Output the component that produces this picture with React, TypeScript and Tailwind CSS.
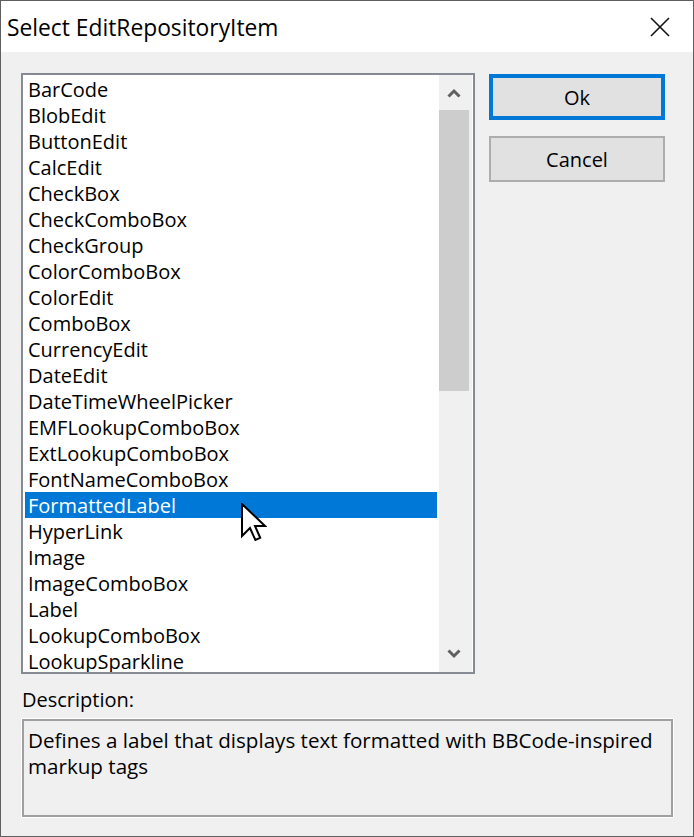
import React from "react";

const items = [
  "BarCode",
  "BlobEdit",
  "ButtonEdit",
  "CalcEdit",
  "CheckBox",
  "CheckComboBox",
  "CheckGroup",
  "ColorComboBox",
  "ColorEdit",
  "ComboBox",
  "CurrencyEdit",
  "DateEdit",
  "DateTimeWheelPicker",
  "EMFLookupComboBox",
  "ExtLookupComboBox",
  "FontNameComboBox",
  "FormattedLabel",
  "HyperLink",
  "Image",
  "ImageComboBox",
  "Label",
  "LookupComboBox",
  "LookupSparkline",
];

function Chevron({ up }: { up: boolean }) {
  return (
    <svg width="14" height="10" viewBox="0 0 14 10">
      <polyline
        points={up ? "1.5,8.5 7,3 12.5,8.5" : "1.5,1.5 7,7 12.5,1.5"}
        fill="none"
        stroke="#606060"
        strokeWidth="3"
        strokeLinejoin="miter"
      />
    </svg>
  );
}

export default function App() {
  return (
    <div className="relative w-[694px] h-[837px] border border-[#5f5f5f] bg-[#f0f0f0] flex flex-col font-['Open_Sans',sans-serif] text-black overflow-hidden">
      {/* Title bar */}
      <div className="h-[51px] bg-white flex items-center justify-between shrink-0">
        <div className="pl-[6px] pt-[2px] text-[22.8px] leading-[30px]">Select EditRepositoryItem</div>
        <div className="w-[60px] h-[51px] flex items-center justify-center mr-[3px]">
          <svg width="20" height="20" viewBox="0 0 20 20">
            <path d="M1 1 L19 19 M19 1 L1 19" stroke="#111" strokeWidth="1.6" />
          </svg>
        </div>
      </div>

      {/* Body */}
      <div className="flex-1 flex flex-col pl-[20px] pt-[21px]">
        <div className="flex gap-[14px]">
          {/* List box */}
          <div className="w-[454px] h-[601px] border-2 border-[#868a92] bg-white flex overflow-hidden">
            <div className="w-[412px] ml-[2px] mr-[2px] pt-[1px] flex flex-col text-[20px] leading-[26px]">
              {items.map((it) => (
                <div
                  key={it}
                  className={
                    it === "FormattedLabel"
                      ? "h-[26px] shrink-0 pl-[3px] pt-[1px] whitespace-nowrap bg-[#0078d7] text-white"
                      : "h-[26px] shrink-0 pl-[3px] pt-[1px] whitespace-nowrap"
                  }
                >
                  {it}
                </div>
              ))}
            </div>
            {/* Scrollbar */}
            <div className="w-[33px] h-full bg-[#f0f0f0] flex flex-col shrink-0">
              <div className="h-[35px] flex items-center justify-center pr-[3px]">
                <Chevron up />
              </div>
              <div className="h-[281px] w-[30px] bg-[#cdcdcd]" />
              <div className="flex-1" />
              <div className="h-[37px] flex items-center justify-center pr-[3px]">
                <Chevron up={false} />
              </div>
            </div>
          </div>

          {/* Buttons */}
          <div className="flex flex-col gap-[16px] pt-[1px]">
            <div className="w-[176px] h-[46px] border-4 border-[#0078d7] bg-[#e1e1e1] flex items-center justify-center pt-[2px] text-[20px]">
              Ok
            </div>
            <div className="w-[176px] h-[46px] border-2 border-[#adadad] bg-[#e1e1e1] flex items-center justify-center pt-[2px] text-[20px]">
              Cancel
            </div>
          </div>
        </div>

        <div className="mt-[13px] h-[26px] leading-[26px] text-[20px] pl-[1px]">Description:</div>

        <div className="mt-[5px] w-[653px] h-[100px] border border-white">
          <div className="w-full h-full border-2 border-[#a0a0a0] bg-[#f0f0f0] pl-[4px] pt-[6px] text-[20.6px] leading-[26px]">
            <div className="whitespace-nowrap">Defines a label that displays text formatted with BBCode-inspired</div>
            <div className="whitespace-nowrap">markup tags</div>
          </div>
        </div>
      </div>

      {/* Mouse cursor overlay */}
      <div className="absolute left-[240px] top-[502px]">
        <svg width="26" height="40" viewBox="0 0 13 20">
          <path
            d="M0.5 0.5 L0.5 16.5 L4.5 12.5 L7.2 18.5 L9.6 17.4 L7 11.5 L12 11.5 Z"
            fill="#fff"
            stroke="#000"
            strokeWidth="1"
            strokeLinejoin="miter"
          />
        </svg>
      </div>
    </div>
  );
}
